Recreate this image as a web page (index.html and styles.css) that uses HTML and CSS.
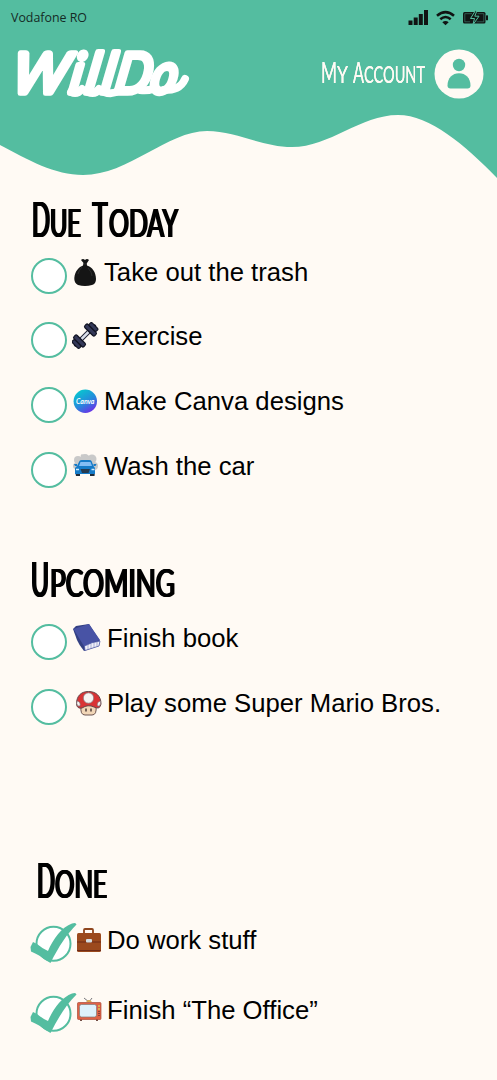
FILE: index.html
```html
<!DOCTYPE html>
<html lang="en">
<head>
<meta charset="utf-8">
<title>WillDo</title>
<link rel="stylesheet" href="styles.css">
</head>
<body>
<header class="header">
  <svg class="wave" viewBox="0 0 497 180"><path d="M0 0H497V178C465 145 430 115 398 115C360 115 330 147 292 147C262 147 236 131 207 131C167 131 129 175 83 175C55 175 28 160 0 145Z"/></svg>
  <div class="status">
    <span class="carrier">Vodafone RO</span>
    <svg class="status-icons" width="82" height="18" viewBox="407 8 82 18">
      <path d="M408.5 20.5h4V25h-4zM413.7 17.5h4V25h-4zM418.8 14h4V25h-4zM424 10h4V25h-4z"/>
      <path class="wifi" d="M437 15.7Q445.500 8.500 454 15.700M440.300 19.200Q445.500 14.800 450.700 19.200"/>
      <path d="M442.300 22.200Q445.500 19.600 448.700 22.200L445.500 25.300Z"/>
      <rect x="463" y="12" width="22.500" height="11.500" rx="1.500"/>
      <rect x="486" y="15.300" width="2" height="5" rx=".6"/>
      <path class="battery-rim" d="M464.800 13.700H472M464.800 13.700V21.800H470M477.500 13.700H483.800V21.800H476.500"/>
      <path class="bolt" d="M475.500 10.500L470.500 18.500H474.500L472.800 25L479 16.200H474.800L477 10.500Z"/>
    </svg>
  </div>
  <div class="brand-row">
    <svg class="logo" width="180" height="56" viewBox="10 45 180 56">
      <g class="logo-text" transform="translate(0 93) skewX(-10)">
        <text x="10" y="0" textLength="56" lengthAdjust="spacingAndGlyphs">W</text>
        <text x="68" y="0" textLength="12" lengthAdjust="spacingAndGlyphs">i</text>
        <text x="84" y="0" textLength="12" lengthAdjust="spacingAndGlyphs">l</text>
        <text x="100" y="0" textLength="12" lengthAdjust="spacingAndGlyphs">l</text>
        <text x="113" y="0" textLength="36" lengthAdjust="spacingAndGlyphs">D</text>
        <text x="149" y="0" textLength="26" lengthAdjust="spacingAndGlyphs">o</text>
      </g>
      <path class="swash" d="M71 92Q77 95 82 89M88 92Q95 95 99 89M104 92Q112 95 118 91M140 90Q147 91 153 89M164 90C174 90 181 88 185 79"/>
    </svg>
    <div class="account">
      <svg class="account-label" width="106" height="28" viewBox="320 58 106 28">
        <g class="deco-small">
          <text x="320" y="83" class="cap" textLength="16" lengthAdjust="spacingAndGlyphs">M</text>
          <text x="336" y="83" textLength="11" lengthAdjust="spacingAndGlyphs">Y</text>
          <text x="352" y="83" class="cap" textLength="11" lengthAdjust="spacingAndGlyphs">A</text>
          <text x="363" y="83" textLength="61" lengthAdjust="spacingAndGlyphs">CCOUNT</text>
        </g>
      </svg>
      <svg class="avatar" width="50" height="50" viewBox="0 0 50 50"><circle class="disc" cx="25" cy="25" r="24.500"/><circle cx="25" cy="16" r="6.200"/><path d="M13.500 36.500C13.500 29 18.500 24.300 25 24.300S36.500 29 36.500 36.500Q36.500 39.500 33.500 39.500H16.500Q13.500 39.500 13.500 36.500Z"/></svg>
    </div>
  </div>
</header>
<main>
  <section class="today">
    <svg class="heading" width="150" height="40" viewBox="31 200 150 40">
      <text x="31" y="237" class="cap" textLength="18" lengthAdjust="spacingAndGlyphs">D</text>
      <text x="49" y="237" textLength="31" lengthAdjust="spacingAndGlyphs">UE</text>
      <text x="91.500" y="237" class="cap" textLength="15" lengthAdjust="spacingAndGlyphs">T</text>
      <text x="108" y="237" textLength="69" lengthAdjust="spacingAndGlyphs">ODAY</text>
    </svg>
    <ul class="tasks">
      <li><span class="circle"></span>
        <svg class="icon" viewBox="0 0 30 30"><path fill="#151515" d="M9 2Q11 0 13 2Q15 0 17 2L14.700 5.500L15 7.500C20 9 24 14 24 21Q24 26 20 27Q13 29 6 27Q2 25 2.300 20C3 13 7 9 11 7.500L11.500 5Z"/><path fill="none" stroke="#373737" stroke-width=".7" d="M11 6H15M10 9Q7 12 6 16M16 10Q20 14 20 18"/></svg>
        <span class="label">Take out the trash</span></li>
      <li><span class="circle"></span>
        <svg class="icon" viewBox="0 0 30 30"><g transform="rotate(-45 13 13.500)"><rect x="-2" y="12" width="30" height="3" rx="1" fill="#17192d"/><rect x="7" y="11.700" width="12" height="3.600" fill="#dce0ec" stroke="#252638"/><g fill="#343858" stroke="#111322" stroke-width="1.200"><rect x="-1" y="8.500" width="4" height="10" rx="1.500"/><rect x="3" y="6.500" width="4.500" height="14" rx="1.500"/><rect x="18.500" y="6.500" width="4.500" height="14" rx="1.500"/><rect x="23" y="8.500" width="4" height="10" rx="1.500"/></g></g></svg>
        <span class="label">Exercise</span></li>
      <li><span class="circle"></span>
        <svg class="icon" viewBox="0 0 30 30"><defs><linearGradient id="canva" x1=".15" y1=".1" x2=".7" y2="1"><stop stop-color="#08c5cf"/><stop offset=".55" stop-color="#2689dc"/><stop offset="1" stop-color="#6d2ee8"/></linearGradient></defs><circle cx="13.300" cy="14.200" r="11.700" fill="url(#canva)"/><text class="canva-word" x="4" y="16.500" textLength="18.500" lengthAdjust="spacingAndGlyphs">Canva</text></svg>
        <span class="label">Make Canva designs</span></li>
      <li><span class="circle"></span>
        <svg class="icon" viewBox="0 0 30 30"><g fill="#c9c9c9"><circle cx="6" cy="8" r="4"/><circle cx="13" cy="7" r="5"/><circle cx="20" cy="7" r="4.500"/><circle cx="22" cy="14" r="4"/><circle cx="4" cy="14" r="3"/><circle cx="10" cy="3.500" r="1.200"/></g><path fill="#202c3a" d="M3 19h5v5H4zM18 19h5l-.5 5H18z"/><path fill="#167bc8" d="M3 16L5 14L7.500 9Q8 8 10 8H17Q19 8 19.500 9L21.500 14L23 16V22H3Z"/><path fill="#84bdf4" d="M8.500 10H18.500L20 14H7Z"/><path fill="#263b50" d="M8.500 17H18L16.500 21H10Z"/><path stroke="#cceaff" stroke-width="1.500" d="M4 17.500h3M19.500 17.500h3"/><path fill="#167bc8" d="M2 12h3v2H3zM21.500 12h3l-1 2h-2z"/></svg>
        <span class="label">Wash the car</span></li>
    </ul>
  </section>
  <section class="upcoming">
    <svg class="heading" width="150" height="40" viewBox="31 560 150 40">
      <text x="30" y="596.500" class="cap" textLength="18" lengthAdjust="spacingAndGlyphs">U</text>
      <text x="49" y="596.500" textLength="125" lengthAdjust="spacingAndGlyphs">PCOMING</text>
    </svg>
    <ul class="tasks">
      <li><span class="circle"></span>
        <svg class="icon" viewBox="0 0 30 30"><path fill="#334083" d="M1 5L4 2L17 0L28 17L27 22L12 27Q7 21 5 16Z"/><path fill="#4853a5" d="M1.500 5L17 0L28 16Q20 18 12.500 23Z"/><path fill="#f1f1fa" stroke="#4853a5" stroke-width=".7" d="M12.500 22Q20 18 28 17L27 22L13 26.500Z"/><path stroke="#7981b5" stroke-width=".6" d="M16 21v4M19 20v4M22 19v4M25 18v4"/></svg>
        <span class="label">Finish book</span></li>
      <li><span class="circle"></span>
        <svg class="icon" viewBox="0 0 30 30"><path fill="#f2d6b7" stroke="#6d5550" stroke-width="1" d="M9 17Q16 14 24 17Q25 26 20 26H13Q8 26 9 17Z"/><path fill="#d93335" stroke="#64484c" stroke-width="1" d="M4.500 15C4.500 7 9 2.500 16.500 2.500S29 7 29 15Q28 21 22 18Q16 15 10 19Q5 20 4.500 15Z"/><g fill="#f6f3f2" stroke="#82777b" stroke-width=".7"><circle cx="16.500" cy="9" r="5.200"/><path d="M5 12Q9 13 8 17L6 17Q4 15 5 12ZM28.500 12Q24.500 13 25.500 17L27.500 17Q29 15 28.500 12Z"/></g><path stroke="#3f302d" stroke-width="1.400" d="M14 19.500v3M19 19.500v3"/></svg>
        <span class="label">Play some Super Mario Bros.</span></li>
    </ul>
  </section>
  <section class="done">
    <svg class="heading" width="75" height="40" viewBox="37 861 75 40">
      <text x="36" y="898" class="cap" textLength="18" lengthAdjust="spacingAndGlyphs">D</text>
      <text x="54" y="898" textLength="52" lengthAdjust="spacingAndGlyphs">ONE</text>
    </svg>
    <ul class="tasks">
      <li><svg class="checked" viewBox="0 0 48 42"><circle cx="23.500" cy="21.800" r="17"/><path d="M.5 25L3 20L7 22Q13 27 18 29C23 17 32 5 42 1.500Q46 0 46.500 2.500C37 12 29 24 20.500 41Q15 38 10 34Q5 31 1 29.500Z"/></svg>
        <svg class="icon" viewBox="0 0 30 30"><path fill="none" stroke="#8f451e" stroke-width="1.800" d="M12 8V4Q12 3 13 3H20Q21 3 21 4V8"/><rect x="5" y="7" width="24" height="19" rx="1.500" fill="#9b491d"/><path stroke="#6f2b17" stroke-width="1.200" d="M5 16L29 16M5 24.500H29"/><rect x="14" y="13" width="6" height="3.500" rx="1" fill="#d4dde2"/></svg>
        <span class="label">Do work stuff</span></li>
      <li><svg class="checked" viewBox="0 0 48 42"><circle cx="23.500" cy="21.800" r="17"/><path d="M.5 25L3 20L7 22Q13 27 18 29C23 17 32 5 42 1.500Q46 0 46.500 2.500C37 12 29 24 20.500 41Q15 38 10 34Q5 31 1 29.500Z"/></svg>
        <svg class="icon" viewBox="0 0 30 30"><path fill="none" stroke="#77777b" d="M12 2L17 6L20 2"/><path fill="#dbaa4e" d="M14 6L16 4H18L20 6Z"/><path stroke="#755047" stroke-width="2" d="M9 23v2M25 23v2"/><rect x="5.500" y="6.500" width="23.500" height="17" rx="1" fill="#df6245" stroke="#a94c3a" stroke-width=".7"/><rect x="7.500" y="8.500" width="17" height="12.500" rx="2" fill="#def2fb" stroke="#817c79" stroke-width=".7"/><path stroke="#d9b04f" stroke-width="2" d="M27 9v2M27 12v2"/><path stroke="#713d35" stroke-width="1.500" stroke-dasharray="1" d="M27 15v6"/></svg>
        <span class="label">Finish “The Office”</span></li>
    </ul>
  </section>
</main>
</body>
</html>
```

FILE: styles.css
```css
* { box-sizing: border-box; }
body {
  margin: 0;
  width: 497px;
  height: 1080px;
  overflow: hidden;
  background: #fffaf4;
  color: #000;
  font-family: "Liberation Sans", Arial, sans-serif;
}
svg { display: block; flex: none; }
.header { position: relative; height: 200px; }
.wave { position: absolute; inset: 0 0 auto; width: 497px; height: 180px; fill: #54bda0; }
.status {
  position: relative;
  display: flex;
  justify-content: space-between;
  height: 45px;
  padding: 8px 8px 0 11px;
}
.carrier { font: 12.4px/18px "Open Sans", sans-serif; color: #142b26; padding-top: 1px; }
.status-icons { fill: #101413; }
.status-icons .wifi { fill: none; stroke: #101413; stroke-width: 2.6; }
.status-icons .battery-rim { fill: none; stroke: #468775; stroke-width: .6; }
.status-icons .bolt { stroke: #54bda0; stroke-width: 1; }
.brand-row {
  position: relative;
  display: flex;
  justify-content: space-between;
  padding: 0 13px 0 10px;
}
.logo { overflow: visible; }
.logo-text { font: italic 400 56px Lato, sans-serif; fill: #fff; stroke: #fff; stroke-width: 5.5; stroke-linejoin: round; }
.swash { fill: none; stroke: #fff; stroke-width: 8; stroke-linecap: round; }
.account { display: flex; gap: 7px; padding-top: 4px; }
.account-label { margin-top: 9px; overflow: visible; filter: drop-shadow(.8px 0 0 #fffaf4); }
.deco-small { font: 24px Lato, sans-serif; fill: #fffaf4; }
.deco-small .cap { font-size: 29px; }
.avatar { fill: #54bda0; }
.avatar .disc { fill: #fffaf4; }
.heading { font: 400 39px Lato, sans-serif; overflow: visible; filter: drop-shadow(1px 0 0 #000) drop-shadow(1px 0 0 #000); }
.heading .cap { font-size: 48px; }
.today { height: 360px; padding-left: 31px; }
.upcoming { height: 301px; padding-left: 31px; }
.done { padding-left: 30px; }
.done .heading { margin-left: 7px; }
.tasks {
  display: flex;
  flex-direction: column;
  list-style: none;
  margin: 0;
  padding: 0;
  font-size: 25.7px;
  line-height: 28px;
}
.tasks li { display: flex; height: 36px; white-space: nowrap; }
.today .tasks { gap: 28.7px; margin-top: 17.5px; }
.upcoming .tasks { gap: 29.2px; margin-top: 24px; }
.done .tasks { gap: 34px; margin-top: 25px; }
.circle { flex: none; width: 36px; height: 36px; border: 2px solid #54bda0; border-radius: 50%; background: #fff; }
.icon { width: 30px; height: 30px; margin: 0 2px 0 5px; }
.upcoming .icon, .done .icon { margin-right: 5px; }
.checked { width: 48px; height: 42px; margin: -4px -11px 0 0; fill: #54bda0; }
.checked circle { fill: #fff; stroke: #54bda0; stroke-width: 2; }
.canva-word { font: italic 700 7px Lato, sans-serif; fill: #fff; }
```
